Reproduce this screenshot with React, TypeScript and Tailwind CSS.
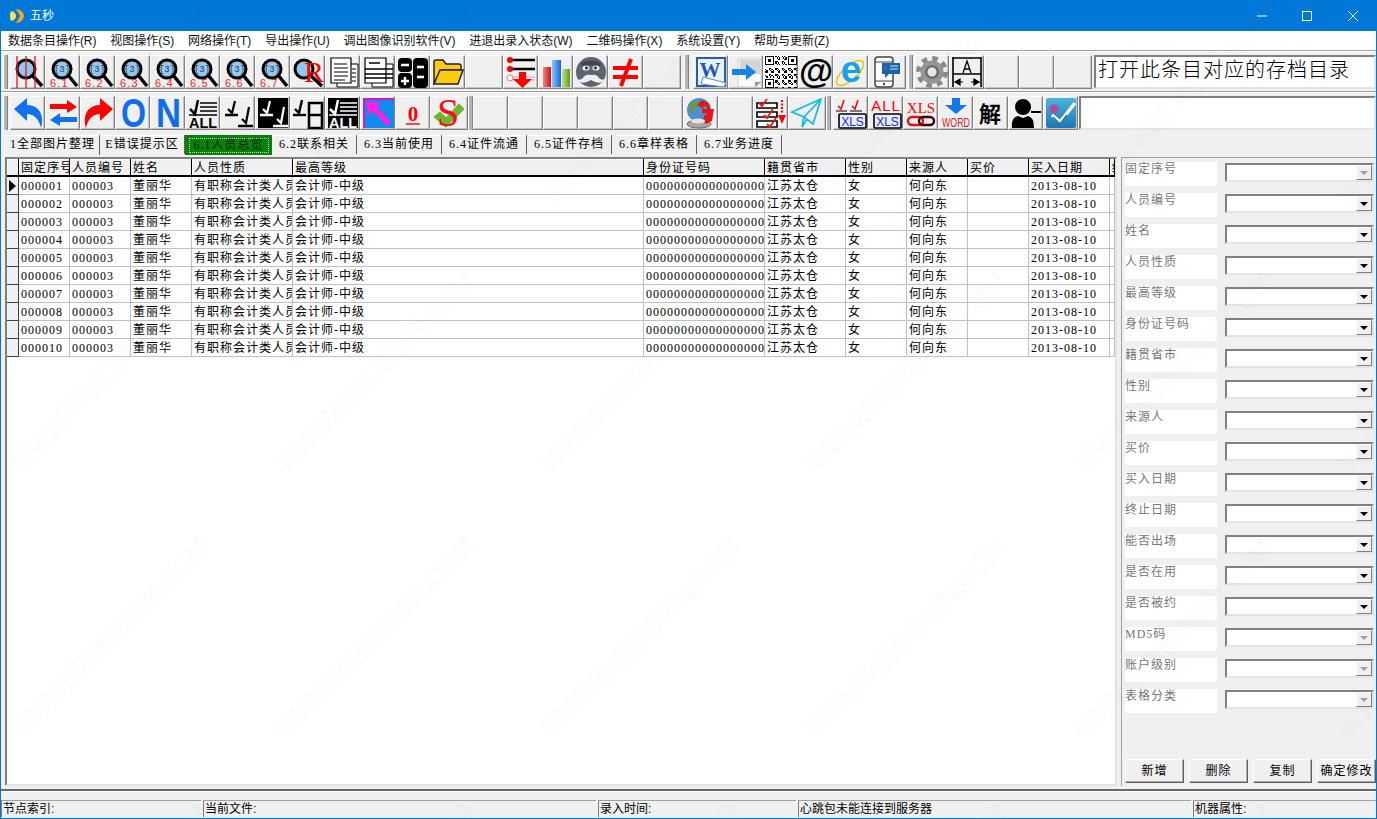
import type { ReactNode } from "react";

const menus = ["数据条目操作(R)", "视图操作(S)", "网络操作(T)", "导出操作(U)", "调出图像识别软件(V)", "进退出录入状态(W)", "二维码操作(X)", "系统设置(Y)", "帮助与更新(Z)"];
const tabs = ["E错误提示区", "6.1人员总览", "6.2联系相关", "6.3当前使用", "6.4证件流通", "6.5证件存档", "6.6章样表格", "6.7业务进度"];
const headers = ["固定序号", "人员编号", "姓名", "人员性质", "最高等级", "身份证号码", "籍贯省市", "性别", "来源人", "买价", "买入日期", "终止日期"];
const fields = [
  ["固定序号", true], ["人员编号"], ["姓名"], ["人员性质"], ["最高等级"], ["身份证号码"], ["籍贯省市"], ["性别"], ["来源人"],
  ["买价"], ["买入日期"], ["终止日期"], ["能否出场"], ["是否在用"], ["是否被约"], ["MD5码", true], ["账户级别", true], ["表格分类", true],
] as [string, boolean?][];
const rows = Array.from({ length: 10 }, (_, i) => [
  String(i + 1).padStart(6, "0"), "000003", "董丽华", "有职称会计类人员", "会计师-中级", "000000000000000000", "江苏太仓", "女", "何向东", "", "2013-08-10", "",
]);

const gridCols = "grid grid-cols-[12px_51px_61px_61px_101px_351px_121px_81px_61px_61px_61px_81px_5px]";
const sunken = "border-2 border-t-[#808080] border-l-[#808080] border-r-[#e4e4e4] border-b-[#e4e4e4] bg-white";

function Ico({ children }: { children: ReactNode }) {
  return <svg viewBox="0 0 32 32" className="h-8 w-8 shrink-0">{children}</svg>;
}

function Btn({ children, wide, white }: { children?: ReactNode; wide?: boolean; white?: boolean }) {
  return (
    <div className={`flex h-[34px] shrink-0 items-center border border-t-white border-l-white border-r-[#808080] border-b-[#808080] pl-px shadow-[inset_-1px_-1px_0_#c4c4c4] ${wide ? "w-[38px]" : "w-[35px]"} ${white ? "bg-white" : "bg-[#f0f0f0]"}`}>
      {children}
    </div>
  );
}

function Grip() {
  return <div className="h-[34px] w-[5px] shrink-0 border-l border-l-white border-r border-r-[#808080] bg-[#b4b4b4]" />;
}

function Lens({ cx = 14, r = 9 }: { cx?: number; r?: number }) {
  return (
    <>
      <line x1={cx + 6} y1={19} x2={30} y2={30} stroke="#000" strokeWidth="3.5" />
      <circle cx={cx} cy={13} r={r} fill="#93c8ee" stroke="#000" strokeWidth="3" />
    </>
  );
}

function MagNum({ n }: { n: number }) {
  return (
    <Ico>
      <Lens cx={15} r={9} />
      <text x="15" y="16" textAnchor="middle" fontSize="9" fill="#335" fontFamily="Liberation Mono">[3]</text>
      <text x="3" y="30.5" fontSize="11" fill="#ff2020" letterSpacing="1.2" fontFamily="Liberation Sans">{`6.${n}`}</text>
    </Ico>
  );
}

const MagLines = () => (
  <Ico>
    <Lens />
    <path d="M5 0V32M14 0V32M23 0V32" stroke="#f01020" strokeWidth="1.3" />
  </Ico>
);

const MagR = () => (
  <Ico>
    <Lens cx={12} r={9} />
    <text x="12" y="26" fontSize="30" fill="#f00" fontFamily="Liberation Serif">R</text>
  </Ico>
);

const Docs = () => (
  <Ico>
    <path d="M10 8H31V31H10Z" fill="#fff" stroke="#000" />
    <path d="M4 2H24V27H4Z" fill="#fff" stroke="#000" strokeWidth="1.2" />
    <path d="M7 8H20M7 12H21M7 16H21M7 20H21M7 24H18M25 13H29M25 17H29M25 21H29M25 25H29" stroke="#000" />
  </Ico>
);

const Docs2 = () => (
  <Ico>
    <path d="M10 8H31V31H10Z" fill="#fff" stroke="#000" />
    <path d="M3 2H24V27H3Z" fill="#fff" stroke="#000" strokeWidth="1.2" />
    <path d="M7 7H18M3 13H31M3 18H31M3 22H31" stroke="#000" strokeWidth="1.4" />
  </Ico>
);

const Calc = () => (
  <Ico>
    <rect x="1" y="2" width="14" height="14" rx="4" fill="#000" />
    <rect x="1" y="17" width="14" height="15" rx="4" fill="#000" />
    <rect x="16" y="2" width="15" height="30" rx="4" fill="#000" />
    <path d="M4 9H12M4 25H12M8 21V29M20 11H27M20 21H27" stroke="#fff" strokeWidth="2.4" />
  </Ico>
);

const Folder = () => (
  <Ico>
    <path d="M2 27V6Q2 4 4 4H11L14 8H27Q29 8 29 10V14H10Z" fill="#ffcb16" stroke="#222" strokeWidth="1.5" />
    <path d="M2 28L8 14H31L26 28Z" fill="#ffcb0c" stroke="#222" strokeWidth="1.5" />
  </Ico>
);

const ListDown = () => (
  <Ico>
    <path d="M5 4H30M5 13H30" stroke="#000" strokeWidth="2.4" />
    <path d="M5 21H30M5 24H30" stroke="#f7a0a0" strokeWidth="1.2" />
    <circle cx="5" cy="4" r="3" fill="#f00" />
    <circle cx="5" cy="13" r="3" fill="#f00" />
    <circle cx="5" cy="22" r="3" fill="#fff" stroke="#f77" />
    <path d="M14 16H21V23H27L17.5 32L8 23H14Z" fill="#f00" />
  </Ico>
);

const Bars = () => (
  <Ico>
    <defs>
      <linearGradient id="br" x1="0" x2="1"><stop stopColor="#ff8080" /><stop offset="1" stopColor="#c01818" /></linearGradient>
      <linearGradient id="bb" x1="0" x2="1"><stop stopColor="#8cc4ff" /><stop offset="1" stopColor="#1568d8" /></linearGradient>
      <linearGradient id="bg" x1="0" x2="1"><stop stopColor="#c4e28a" /><stop offset="1" stopColor="#5c9a18" /></linearGradient>
    </defs>
    <rect x="3" y="11" width="8" height="20" fill="url(#br)" />
    <rect x="12" y="4" width="9" height="27" fill="url(#bb)" />
    <rect x="22" y="13" width="8" height="18" fill="url(#bg)" />
  </Ico>
);

const Face = () => (
  <Ico>
    <circle cx="16" cy="16" r="15" fill="#5c6472" />
    <path d="M6 7Q16 2 26 7L25 11Q16 7 7 11Z" fill="#3f4652" />
    <ellipse cx="11" cy="12" rx="3.6" ry="2.6" fill="#e8e8e8" />
    <ellipse cx="21" cy="12" rx="3.6" ry="2.6" fill="#e8e8e8" />
    <circle cx="11.5" cy="12" r="1.4" fill="#222" />
    <circle cx="20.5" cy="12" r="1.4" fill="#222" />
    <path d="M16 19Q10 18 8 22Q5 25 2 23Q6 30 16 24Q26 30 30 23Q27 25 24 22Q22 18 16 19Z" fill="#eee" />
  </Ico>
);

const NotEq = () => (
  <Ico>
    <path d="M3 12H28M3 21H28M21 3L11 30" stroke="#f00" strokeWidth="4" />
  </Ico>
);

const WordIco = () => (
  <Ico>
    <rect x="2" y="2" width="28" height="28" fill="#e8f0fa" stroke="#2a5ea8" strokeWidth="2" />
    <text x="15" y="21" textAnchor="middle" fontSize="21" fontWeight="bold" fill="#1c58b0" fontFamily="Liberation Serif">W</text>
    <path d="M8 21L31 27L29 31L6 28Z" fill="#fff" stroke="#5c8ccc" />
  </Ico>
);

const PageArrow = () => (
  <Ico>
    <path d="M8 3H31V26L25 31H8Z" fill="#fbfbfb" stroke="#d0d0d0" />
    <path d="M10 4H30V18H10Z" fill="#d4d4d8" />
    <path d="M25 31L25 26H31Z" fill="#999" />
    <path d="M2 13H16V8L26 16L16 24V19H2Z" fill="#1484e8" />
  </Ico>
);

function Qr() {
  const cells: ReactNode[] = [];
  const finder = (x: number, y: number) =>
    (x < 7 && y < 7) || (x > 17 && y < 7) || (x < 7 && y > 17);
  for (let y = 0; y < 25; y++) {
    for (let x = 0; x < 25; x++) {
      if (finder(x, y)) continue;
      if (((x * 7 + y * 13 + x * y) % 5) < 2 && !(x === 7 || y === 7 || (x === 17 && y < 8) || (y === 17 && x < 8))) {
        cells.push(<rect key={`${x}-${y}`} x={x} y={y} width="1" height="1" fill="#000" />);
      }
    }
  }
  const eye = (x: number, y: number) => (
    <g key={`e${x}${y}`}>
      <rect x={x + 0.5} y={y + 0.5} width="6" height="6" fill="none" stroke="#000" />
      <rect x={x + 2} y={y + 2} width="3" height="3" fill="#000" />
    </g>
  );
  return (
    <svg viewBox="0 0 25 25" className="h-8 w-8 shrink-0" shapeRendering="crispEdges">
      {cells}
      {eye(0, 0)}
      {eye(18, 0)}
      {eye(0, 18)}
    </svg>
  );
}

const At = () => (
  <Ico>
    <text x="16" y="27" textAnchor="middle" fontSize="35" fontWeight="bold" fill="#000" fontFamily="Liberation Sans">@</text>
  </Ico>
);

const IeIco = () => (
  <Ico>
    <ellipse cx="15" cy="17" rx="17" ry="7" transform="rotate(-42 15 17)" fill="none" stroke="#f3c30c" strokeWidth="1.6" />
    <text x="16" y="26" textAnchor="middle" fontSize="37" fontWeight="bold" fill="#14a4e6" fontFamily="Liberation Sans">e</text>
  </Ico>
);

const Phone = () => (
  <Ico>
    <rect x="5" y="1" width="18" height="30" rx="3" fill="#fff" stroke="#444" strokeWidth="1.5" />
    <path d="M5 6H23M5 25H23" stroke="#444" />
    <circle cx="14" cy="28" r="1.2" fill="#444" />
    <path d="M12 7H30V18H19L15 22V18H12Z" fill="#1267a8" />
    <path d="M14 11L15.5 14L17.5 11Z" fill="#f33" />
    <path d="M20 10H28M20 13H28" stroke="#cfe6f6" />
  </Ico>
);

const Gear = () => (
  <Ico>
    <circle cx="16" cy="16" r="13" fill="none" stroke="#8a8a8a" strokeWidth="6" strokeDasharray="5.2 5" />
    <circle cx="16" cy="16" r="11.5" fill="#969696" />
    <circle cx="16" cy="16" r="7" fill="#6e6e6e" />
    <circle cx="16" cy="16" r="4.5" fill="#e8e8e8" />
  </Ico>
);

const Measure = () => (
  <Ico>
    <path d="M2 1V31M30 1V31M2 2H30M2 18H30" stroke="#000" strokeWidth="1.6" />
    <path d="M12 17L16 5L20 17M13.5 13H18.5" fill="none" stroke="#000" strokeWidth="1.3" />
    <path d="M4 26H12M20 26H28M4 26L9 23V29ZM28 26L23 23V29Z" stroke="#000" strokeWidth="1.2" />
  </Ico>
);

const Undo = () => (
  <Ico>
    <path d="M2 12L15 1V8C26 8 33 17 29 31C27 22 22 17 15 17V24Z" fill="#0f70f0" />
  </Ico>
);

const Redo = () => (
  <Ico>
    <path d="M31 12L18 1V8C7 8 0 17 4 31C6 22 11 17 18 17V24Z" fill="#f00" />
  </Ico>
);

const Swap = () => (
  <Ico>
    <path d="M3 7H20V3L30 10L20 16V12H3Z" fill="#f00" />
    <path d="M30 20H13V16L3 23L13 29V25H30Z" fill="#0f70f0" />
  </Ico>
);

function Big({ t }: { t: string }) {
  return (
    <Ico>
      <text x="4" y="30" fontSize="40" fontWeight="bold" fill="#0d6ff0" textLength="25" lengthAdjust="spacingAndGlyphs" fontFamily="Liberation Sans">{t}</text>
    </Ico>
  );
}

const CheckAll = ({ inv }: { inv?: boolean }) => {
  const fg = inv ? "#fff" : "#000";
  return (
    <Ico>
      {inv && <rect x="1" y="1" width="30" height="30" fill="#000" />}
      <path d="M3 12L8 17L11 3" fill="none" stroke={fg} strokeWidth="2.5" />
      <path d="M13 6H30M13 10H30M13 14H30M2 18H30" stroke={fg} strokeWidth="1.6" />
      <text x="2" y="31" fontSize="14" fontWeight="bold" fill={fg} textLength="28" lengthAdjust="spacingAndGlyphs" fontFamily="Liberation Sans">ALL</text>
    </Ico>
  );
};

const TwoChecks = ({ inv }: { inv?: boolean }) => {
  const fg = inv ? "#fff" : "#000";
  return (
    <Ico>
      {inv && <rect x="1" y="1" width="30" height="30" fill="#000" />}
      <path d="M6 12L10 16L13 4M20 22L24 26L27 10" fill="none" stroke={fg} strokeWidth="2.2" />
      <path d="M3 18H16M16 29H31" stroke={fg} strokeWidth="2.4" />
    </Ico>
  );
};

const CheckDay = () => (
  <Ico>
    <path d="M3 12L7 16L10 3" fill="none" stroke="#000" strokeWidth="2.4" />
    <path d="M1 18H14" stroke="#000" strokeWidth="2.4" />
    <path d="M17 6H30V31H17ZM17 18H30" fill="none" stroke="#000" strokeWidth="2.6" />
  </Ico>
);

const PinkArrow = () => (
  <Ico>
    <rect x="1" y="1" width="31" height="30" fill="#0f8cf0" />
    <path d="M1 2H32M2 1V31" stroke="#d818c8" strokeWidth="2" />
    <path d="M4 4L19 6L15 10L29 25L25 29L11 14L7 19Z" fill="#ff20e0" />
  </Ico>
);

const Zero = () => (
  <Ico>
    <text x="16" y="24" textAnchor="middle" fontSize="21" fontWeight="bold" fill="#f00" fontFamily="Liberation Serif">0</text>
    <path d="M9 27H23" stroke="#f00" strokeWidth="1.4" />
  </Ico>
);

const SCheck = () => (
  <Ico>
    <path d="M1 20L8 14L14 20L27 6L33 12L14 31Z" fill="#6fb52c" stroke="#d8e8b8" />
    <text x="16" y="29" textAnchor="middle" fontSize="40" fill="#f01020" fontFamily="Liberation Serif">S</text>
  </Ico>
);

const Globe = () => (
  <Ico>
    <ellipse cx="14" cy="27" rx="12" ry="4" fill="#a8a8a8" stroke="#666" />
    <circle cx="14" cy="13" r="12" fill="#4f8fd0" />
    <path d="M4 9Q9 3 15 5L13 10L8 12L7 18Z" fill="#6a9a3c" />
    <path d="M18 4Q25 4 25 12Q27 20 19 23L19 19Q23 17 22 12Q22 8 18 9L19 12L12 8L18 2Z" fill="#e01818" />
    <path d="M17 12H29L27 24L21 27L16 22L22 21L23 16L17 16Z" fill="#e01818" />
    <ellipse cx="13" cy="24" rx="7" ry="2.5" fill="#e4e4e4" />
  </Ico>
);

const CheckList = () => (
  <Ico>
    <path d="M2 6H22V11H2ZM2 15H22V20H2ZM2 24H22V30H2Z" fill="#fff" stroke="#000" strokeWidth="1.6" />
    <path d="M4 6L7 9L12 2M9 18L12 21L18 12M12 27L15 30L21 21" fill="none" stroke="#f01818" strokeWidth="1.8" />
    <path d="M27 3V17" stroke="#f00" strokeWidth="2" strokeDasharray="2 1.5" />
    <path d="M23 18H31L27 27Z" fill="#f00" />
  </Ico>
);

const Plane = () => (
  <Ico>
    <path d="M2 15L31 2L23 27L14 20ZM14 20L12 30L17 22M14 20L31 2" fill="none" stroke="#18bce8" strokeWidth="1.8" />
  </Ico>
);

function XlsBox() {
  return (
    <>
      <rect x="4" y="17" width="27" height="14" rx="1" fill="#e8eeff" stroke="#000" strokeWidth="1.6" />
      <text x="17.5" y="29" textAnchor="middle" fontSize="12" fill="#1a28e8" fontFamily="Liberation Sans">XLS</text>
    </>
  );
}

const XlsChecks = () => (
  <Ico>
    <path d="M3 9L6 12L9 3M17 9L20 12L23 3" fill="none" stroke="#f00" strokeWidth="1.5" />
    <path d="M1 14H12M15 14H27" stroke="#000" strokeWidth="1.2" />
    <XlsBox />
  </Ico>
);

const XlsAll = () => (
  <Ico>
    <text x="16" y="14" textAnchor="middle" fontSize="15" fill="#f00" letterSpacing="1" fontFamily="Liberation Sans">ALL</text>
    <XlsBox />
  </Ico>
);

const XlsChain = () => (
  <Ico>
    <text x="16" y="16" textAnchor="middle" fontSize="15" fill="#f00" fontFamily="Liberation Serif">XLS</text>
    <rect x="3" y="20" width="15" height="8" rx="4" fill="none" stroke="#e01010" strokeWidth="2.4" />
    <rect x="14" y="20" width="15" height="8" rx="4" fill="none" stroke="#400" strokeWidth="2.4" />
  </Ico>
);

const WordDown = () => (
  <Ico>
    <path d="M12 1H20V8H27L16 17L5 8H12Z" fill="#1478e8" />
    <text x="16" y="30" textAnchor="middle" fontSize="13" fill="#d01c1c" textLength="28" lengthAdjust="spacingAndGlyphs" fontFamily="Liberation Sans">WORD</text>
  </Ico>
);

const Jie = () => (
  <Ico>
    <text x="15" y="25" textAnchor="middle" fontSize="22" fontWeight="bold" fill="#000" fontFamily="Noto Sans CJK SC">解</text>
  </Ico>
);

const PersonMinus = () => (
  <Ico>
    <circle cx="13" cy="10" r="8" fill="#000" />
    <path d="M2 31Q1 20 8 19L13 21L18 19Q24 20 24 31Z" fill="#000" />
    <path d="M21 15H31" stroke="#000" strokeWidth="2" />
  </Ico>
);

const Foursq = () => (
  <Ico>
    <defs>
      <linearGradient id="fs" x1="0" x2="0" y1="0" y2="1"><stop stopColor="#4cb4dc" /><stop offset="1" stopColor="#1878b0" /></linearGradient>
    </defs>
    <rect x="1" y="1" width="30" height="30" rx="2" fill="url(#fs)" />
    <path d="M7 18L15 25L30 6" fill="none" stroke="#fff" strokeWidth="3.4" />
    <path d="M8 20L15 27L22 18" fill="none" stroke="#1c6c9c" strokeWidth="1.4" />
    <circle cx="9" cy="12" r="4.5" fill="#b04aa0" />
  </Ico>
);

function Combo({ off }: { off?: boolean }) {
  return (
    <div className={`ml-[8px] mt-px flex h-[19px] w-[149px] justify-end ${sunken}`}>
      <div className="flex h-[15px] w-[16px] items-center justify-center border border-t-white border-l-white border-r-[#808080] border-b-[#808080] bg-[#f0f0f0]">
        <div className={`h-0 w-0 border-x-[4px] border-t-[4px] border-x-transparent ${off ? "border-t-[#a0a0a0]" : "border-t-black"}`} />
      </div>
    </div>
  );
}

function PanelButton({ children }: { children: ReactNode }) {
  return (
    <div className="flex h-6 w-[59px] items-center justify-center border border-t-white border-l-white border-r-[#606060] border-b-[#606060] bg-[#f0f0f0] shadow-[inset_-1px_-1px_0_#a8a8a8] text-[12px] tracking-[1px] text-black">
      {children}
    </div>
  );
}

function Status({ children, className }: { children?: ReactNode; className: string }) {
  return (
    <div className={`h-[17px] overflow-hidden border-t border-l border-t-[#a0a0a0] border-l-[#808080] pl-px text-[12px] leading-[17px] text-black ${className}`}>
      {children}
    </div>
  );
}

const marks = [-158, 108, 374, 640, 906, 1172, 1438].flatMap((x) => [-160, 106, 372, 638, 904].map((y) => ({ x, y })));

export default function App() {
  return (
    <div className="relative flex h-[819px] w-[1377px] flex-col overflow-hidden border-x border-b border-[#0078d7] bg-[#f0f0f0] font-['Liberation_Sans','Noto_Sans_CJK_SC',sans-serif]">
      {/* title bar */}
      <div className="-mx-px flex h-[31px] shrink-0 items-center bg-[#0078d7] text-white">
        <svg viewBox="0 0 16 16" className="ml-[9px] h-4 w-4">
          <path d="M6 1Q14 1 15 8Q14 15 6 15Q10 12 10 8Q10 4 6 1Z" fill="#f6a81c" />
          <path d="M2 3Q7 4 7 8Q7 12 2 13Q0 8 2 3Z" fill="#ffe14a" />
          <circle cx="9" cy="8" r="2" fill="#0078d7" />
        </svg>
        <span className="ml-[5px] text-[12px]">五秒</span>
        <div className="ml-auto flex items-center">
          <svg viewBox="0 0 10 10" className="mr-[35px] h-2.5 w-2.5"><path d="M0 5H10" stroke="#fff" /></svg>
          <svg viewBox="0 0 10 10" className="mr-[36px] h-2.5 w-2.5"><rect x="0.5" y="0.5" width="9" height="9" fill="none" stroke="#fff" /></svg>
          <svg viewBox="0 0 10 10" className="mr-[19px] h-2.5 w-2.5"><path d="M0 0L10 10M10 0L0 10" stroke="#fff" /></svg>
        </div>
      </div>

      {/* menu */}
      <div className="flex h-[19px] shrink-0 items-center bg-white text-[12px] text-[#111]">
        {menus.map((m) => (
          <span key={m} className="whitespace-nowrap px-[6.875px]">{m}</span>
        ))}
      </div>
      <div className="h-[2px] shrink-0 border-t border-t-[#a0a0a0] border-b border-b-white" />

      {/* toolbar 1 */}
      <div className="mt-[3px] flex h-[34px] shrink-0 pl-[2px]">
        <Grip />
        <div className="ml-[2px] flex">
          <Btn><MagLines /></Btn>
          {[1, 2, 3, 4, 5, 6, 7].map((n) => (
            <Btn key={n}><MagNum n={n} /></Btn>
          ))}
          <Btn><MagR /></Btn>
          <Btn><Docs /></Btn>
          <Btn><Docs2 /></Btn>
          <Btn><Calc /></Btn>
          <Btn><Folder /></Btn>
          <Btn wide />
          <Btn><ListDown /></Btn>
          <Btn><Bars /></Btn>
          <Btn><Face /></Btn>
          <Btn><NotEq /></Btn>
          <Btn wide />
        </div>
        <div className="ml-[3px] mr-[4px]"><Grip /></div>
        <div className="flex">
          <Btn><WordIco /></Btn>
          <Btn><PageArrow /></Btn>
          <Btn white><Qr /></Btn>
          <Btn><At /></Btn>
          <Btn><IeIco /></Btn>
          <Btn wide><Phone /></Btn>
        </div>
        <div className="ml-[2px] mr-px"><Grip /></div>
        <div className="flex">
          <Btn><Gear /></Btn>
          <Btn><Measure /></Btn>
          <Btn />
          <Btn />
          <Btn wide />
        </div>
        <div className={`ml-[2px] flex-1 overflow-hidden pl-[2px] text-[20px] font-light leading-[24px] tracking-[1px] text-black font-['Noto_Sans_CJK_SC',sans-serif] ${sunken}`}>
          打开此条目对应的存档目录
        </div>
      </div>

      <div className="mt-[2px] h-[2px] shrink-0 border-t border-t-[#a0a0a0] border-b border-b-white" />

      {/* toolbar 2 */}
      <div className="mt-[3px] flex h-[34px] shrink-0 pl-[2px]">
        <Grip />
        <div className="ml-[2px] flex">
          <Btn><Undo /></Btn>
          <Btn><Swap /></Btn>
          <Btn><Redo /></Btn>
          <Btn><Big t="O" /></Btn>
          <Btn><Big t="N" /></Btn>
          <Btn><CheckAll /></Btn>
          <Btn><TwoChecks /></Btn>
          <Btn><TwoChecks inv /></Btn>
          <Btn><CheckDay /></Btn>
          <Btn><CheckAll inv /></Btn>
          <Btn><PinkArrow /></Btn>
          <Btn><Zero /></Btn>
          <Btn wide><SCheck /></Btn>
        </div>
        <Grip />
        <div className="flex">
          <Btn /><Btn /><Btn /><Btn /><Btn /><Btn />
          <Btn><Globe /></Btn>
          <Btn />
          <Btn><CheckList /></Btn>
          <Btn wide><Plane /></Btn>
        </div>
        <div className="mr-[2px]"><Grip /></div>
        <div className="flex">
          <Btn><XlsChecks /></Btn>
          <Btn><XlsAll /></Btn>
          <Btn><XlsChain /></Btn>
          <Btn><WordDown /></Btn>
          <Btn><Jie /></Btn>
          <Btn><PersonMinus /></Btn>
          <Btn><Foursq /></Btn>
        </div>
        <div className={`ml-px flex-1 ${sunken}`} />
      </div>

      {/* tabs */}
      <div className="mt-[5px] flex h-5 shrink-0 pl-[2px] text-[12px] leading-[19px] tracking-[1px] text-black font-['Liberation_Serif','Noto_Sans_CJK_SC',serif]">
        <div className="w-[97px] whitespace-nowrap border-r border-r-[#606060] pl-[7px] shadow-[inset_0_1px_0_#fff]">1全部图片整理</div>
        {tabs.map((t) =>
          t.startsWith("6.1") ? (
            <div key={t} className="flex w-[87px] items-center justify-center bg-[#0a7f0a] text-[#06250a]">
              <span className="flex h-[15px] w-[80px] items-center justify-center whitespace-nowrap border border-dotted border-[#b8e0b8]">{t}</span>
            </div>
          ) : (
            <div key={t} className="h-[19px] w-[85px] whitespace-nowrap border-r border-r-[#606060] text-center shadow-[inset_0_1px_0_#fff]">{t}</div>
          )
        )}
      </div>

      {/* main */}
      <div className="mt-[2px] flex h-[629px] shrink-0">
        <div className={`ml-[4px] w-[1112px] shrink-0 overflow-hidden text-[12px] tracking-[1px] text-black font-['Liberation_Serif','Noto_Sans_CJK_SC',serif] ${sunken}`}>
          <div className={gridCols}>
            <div className="h-[18px] border-r border-b-2 border-r-black border-b-black bg-[#f0f0f0] shadow-[inset_1px_1px_0_#fff]" />
            {headers.map((h) => (
              <div key={h} className="h-[18px] overflow-hidden whitespace-nowrap border-r border-b-2 border-r-black border-b-black bg-[#f0f0f0] pl-[2px] leading-[18px] shadow-[inset_1px_1px_0_#fff]">{h}</div>
            ))}
          </div>
          {rows.map((row, i) => (
            <div key={row[0]} className={gridCols}>
              <div className="flex h-[18px] items-center justify-center border-r border-b border-r-[#404040] border-b-[#404040] bg-[#f0f0f0]">
                {i === 0 && <div className="h-0 w-0 border-y-[6px] border-l-[7px] border-y-transparent border-l-black" />}
              </div>
              {row.map((c, j) => (
                <div key={j} className="h-[18px] overflow-hidden whitespace-nowrap border-r border-b border-[#c0c0c0] pl-[2px] leading-[18px]">{c}</div>
              ))}
            </div>
          ))}
        </div>

        <div className="ml-[4px] flex flex-1 flex-col border-t border-l border-t-[#a0a0a0] border-l-[#a0a0a0] pl-[3px] pt-[4px]">
          <div className="flex flex-col gap-[7px] text-[12px] tracking-[1px] text-[#777] font-['Liberation_Serif','Noto_Sans_CJK_SC',serif]">
            {fields.map(([name, off]) => (
              <div key={name} className="flex items-start">
                <div className="h-6 w-[92px] bg-white leading-[14px]">{name}</div>
                <Combo off={off} />
              </div>
            ))}
          </div>
          <div className="mb-[3px] mt-auto flex gap-[5px] font-['Liberation_Serif','Noto_Sans_CJK_SC',serif]">
            <PanelButton>新增</PanelButton>
            <PanelButton>删除</PanelButton>
            <PanelButton>复制</PanelButton>
            <PanelButton>确定修改</PanelButton>
          </div>
        </div>
      </div>

      {/* splitter */}
      <div className="mt-[3px] h-[3px] shrink-0 border-t-2 border-b border-t-[#696969] border-b-white" />

      {/* status bar */}
      <div className="mt-[8px] flex gap-[2px]">
        <Status className="w-[200px]">节点索引:</Status>
        <Status className="w-[393px]">当前文件:</Status>
        <Status className="w-[198px]">录入时间:</Status>
        <Status className="w-[393px]">心跳包未能连接到服务器</Status>
        <Status className="flex-1">机器属性:</Status>
      </div>

      {/* watermark */}
      <div className="pointer-events-none absolute inset-0 overflow-hidden">
        {marks.map((m) => (
          <span
            key={`${m.x}-${m.y}`}
            className="absolute -translate-x-1/2 -translate-y-1/2 -rotate-45 whitespace-nowrap text-[25px] text-transparent [-webkit-text-stroke:1px_rgba(0,0,0,0.04)]"
            style={{ left: m.x, top: m.y }}
          >
            WWW.WEIDOWN.COM
          </span>
        ))}
      </div>
    </div>
  );
}
